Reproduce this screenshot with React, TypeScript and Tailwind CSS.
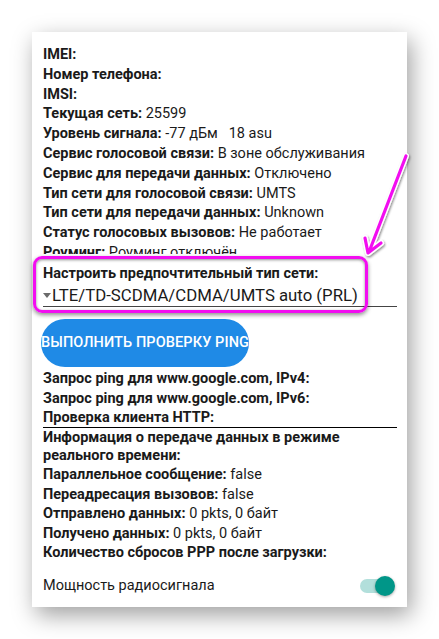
import React from 'react';

const Row = ({ label, value }: { label: string; value?: string }) => (
  <div className="leading-[19.8px] whitespace-pre">
    <span className="font-bold">{label}</span>
    {value ? <span> {value}</span> : null}
  </div>
);

const Row2 = ({ label, value }: { label: string; value?: string }) => (
  <div className="leading-[19.6px] whitespace-pre">
    <span className="font-bold">{label}</span>
    {value ? <span> {value}</span> : null}
  </div>
);

const App = () => {
  return (
    <div
      className="relative w-[439px] h-[639px] bg-white overflow-hidden text-[#1a1a1a]"
      style={{ fontFamily: 'Roboto, "Noto Sans", sans-serif' }}
    >
      <div className="pt-[32px] pl-[32px]">
        <div className="relative w-[375px] h-[575px] bg-white shadow-[4px_8px_22px_rgba(0,0,0,0.38)] pl-[11px] pr-[10px] pt-[13px] text-[14.5px]">
          {/* Top info */}
          <Row label="IMEI:" />
          <Row label="Номер телефона:" />
          <Row label="IMSI:" />
          <Row label="Текущая сеть:" value="25599" />
          <Row label="Уровень сигнала:" value="-77 дБм   18 asu" />
          <Row label="Сервис голосовой связи:" value="В зоне обслуживания" />
          <Row label="Сервис для передачи данных:" value="Отключено" />
          <Row label="Тип сети для голосовой связи:" value="UMTS" />
          <Row label="Тип сети для передачи данных:" value="Unknown" />
          <Row label="Статус голосовых вызовов:" value="Не работает" />
          <div className="h-[11px] overflow-hidden">
            <Row label="Роуминг:" value="Роуминг отключён" />
          </div>

          {/* Preferred network */}
          <div className="mt-[10px] leading-5 font-bold">Настроить предпочтительный тип сети:</div>
          <div className="h-[23px] border-b border-[#444] flex items-center">
            <svg width="8" height="6" viewBox="0 0 8 6" className="mt-[3px] mr-[1px] shrink-0">
              <path d="M0 0 L8 0 L4 5 Z" fill="#6b6b6b" />
            </svg>
            <span className="text-[16.75px] leading-[22px] whitespace-nowrap">LTE/TD-SCDMA/CDMA/UMTS auto (PRL)</span>
          </div>

          {/* Ping button */}
          <button className="mt-[12px] -ml-[2px] w-[208px] h-[48px] rounded-full bg-[#1f8ae6] text-white text-[14.5px] font-medium tracking-[0.1px] flex items-center justify-center whitespace-nowrap">
            ВЫПОЛНИТЬ ПРОВЕРКУ PING
          </button>

          <div className="mt-[2px] leading-5 font-bold">Запрос ping для www.google.com, IPv4:</div>
          <div className="leading-5 font-bold">Запрос ping для www.google.com, IPv6:</div>
          <div className="leading-[18px] h-[19px] border-b border-black font-bold">Проверка клиента HTTP:</div>

          <div className="mt-[1px] leading-[18px] font-bold">
            Информация о передаче данных в режиме
            <br />
            реального времени:
          </div>
          <Row2 label="Параллельное сообщение:" value="false" />
          <Row2 label="Переадресация вызовов:" value="false" />
          <Row2 label="Отправлено данных:" value="0 pkts, 0 байт" />
          <Row2 label="Получено данных:" value="0 pkts, 0 байт" />
          <Row2 label="Количество сбросов PPP после загрузки:" />

          {/* Radio power */}
          <div className="mt-[12px] h-[22px] flex items-center justify-between">
            <span className="text-[14.5px]">Мощность радиосигнала</span>
            <div className="relative w-[34px] h-[14px] rounded-full bg-[#b2dfdb] mr-[3px]">
              <div className="absolute -right-[1px] -top-[3px] w-[20px] h-[20px] rounded-full bg-[#009688] shadow-[0_1px_3px_rgba(0,0,0,0.35)]" />
            </div>
          </div>

          {/* Highlight overlay */}
          <div className="absolute left-[1px] top-[224px] w-[335px] h-[57px] rounded-[9px] border-[3px] border-[#f20df0] shadow-[0_2px_4px_rgba(0,0,0,0.45),inset_0_1px_3px_rgba(0,0,0,0.45)] pointer-events-none" />
        </div>
      </div>

      {/* Arrow overlay */}
      <svg className="absolute inset-0 pointer-events-none" width="439" height="639" viewBox="0 0 439 639">
        <defs>
          <filter id="sh" x="-20%" y="-20%" width="140%" height="140%">
            <feDropShadow dx="1" dy="1.5" stdDeviation="1.2" floodColor="#000" floodOpacity="0.45" />
          </filter>
        </defs>
        <g filter="url(#sh)" strokeLinecap="round" strokeLinejoin="round" fill="none">
          <path d="M406 156 L369 252 M365 238 L368 253 L381 243" stroke="#fff" strokeWidth="6" />
          <path d="M406 156 L369 252 M365 238 L368 253 L381 243" stroke="#f20df0" strokeWidth="3.2" />
        </g>
      </svg>
    </div>
  );
};

export default App;
